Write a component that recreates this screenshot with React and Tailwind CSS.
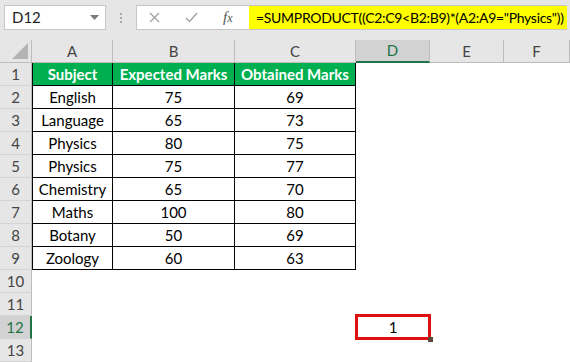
import React from "react";

const cols = [
  { key: "A", w: "w-[81px]" },
  { key: "B", w: "w-[122px]" },
  { key: "C", w: "w-[121px]" },
  { key: "D", w: "w-[74px]" },
  { key: "E", w: "w-[74px]" },
  { key: "F", w: "w-[66px]" },
];

const data = [
  ["Subject", "Expected Marks", "Obtained Marks"],
  ["English", "75", "69"],
  ["Language", "65", "73"],
  ["Physics", "80", "75"],
  ["Physics", "75", "77"],
  ["Chemistry", "65", "70"],
  ["Maths", "100", "80"],
  ["Botany", "50", "69"],
  ["Zoology", "60", "63"],
];

function Cell({ r, c }) {
  const col = cols[c];
  const inTable = r <= 9 && c <= 2;
  let cls = `${col.w} h-full shrink-0 flex items-center justify-center text-[15px] text-black whitespace-nowrap`;
  if (inTable) {
    cls += " border-r border-b border-black";
    if (c === 0) cls += " border-l";
    if (r === 1) cls += " bg-[#00b050] text-white font-bold text-[15.5px]";
  }
  const text = inTable ? data[r - 1][c] : "";
  if (r === 12 && c === 3) {
    return (
      <div className={`${col.w} h-full shrink-0 relative`}>
        <div className="absolute left-[-1px] top-[-2px] w-[76px] h-[26px] border-[3px] border-[#e01010] flex items-center justify-center text-[15px] text-black">
          1
        </div>
        <div className="absolute right-[-3px] bottom-[-3px] w-[5px] h-[5px] bg-[#5a4a3a]" />
      </div>
    );
  }
  return <div className={cls}>{text}</div>;
}

export default function App() {
  const rows = Array.from({ length: 13 }, (_, i) => i + 1);
  return (
    <div
      className="w-[570px] h-[362px] overflow-hidden bg-white"
      style={{ fontFamily: "Lato, 'Open Sans', sans-serif" }}
    >
      {/* Formula bar */}
      <div className="h-[40px] bg-[#e6e6e6] flex items-start pt-[5px] pl-[4px]">
        <div className="w-[102px] h-[25px] bg-white border border-[#c6c6c6] flex items-center justify-between pl-[7px] pr-[6px]">
          <span className="text-[15px] text-[#222]">D12</span>
          <svg width="9" height="6" viewBox="0 0 9 6">
            <path d="M0 0 L9 0 L4.5 5 Z" fill="#7a7a7a" />
          </svg>
        </div>
        <div className="w-[30px] h-[25px] flex flex-col items-center justify-center gap-[2px]">
          <div className="w-[2px] h-[2px] bg-[#a8a8a8]" />
          <div className="w-[2px] h-[2px] bg-[#a8a8a8]" />
          <div className="w-[2px] h-[2px] bg-[#a8a8a8]" />
        </div>
        <div className="w-[113px] h-[25px] bg-white border border-[#c6c6c6] border-r-0 flex items-center">
          <svg className="ml-[12px]" width="11" height="11" viewBox="0 0 11 11">
            <path d="M1 1 L10 10 M10 1 L1 10" stroke="#a3a3a3" strokeWidth="1.4" />
          </svg>
          <svg className="ml-[25px]" width="13" height="11" viewBox="0 0 13 11">
            <path d="M1 6 L4.5 9.5 L12 1" stroke="#a3a3a3" strokeWidth="1.5" fill="none" />
          </svg>
          <span
            className="ml-[25px] text-[15px] italic text-[#555]"
            style={{ fontFamily: "'Liberation Serif', serif" }}
          >
            f<span className="text-[12px]">x</span>
          </span>
        </div>
        <div className="w-[318px] h-[25px] bg-[#ffff00] border-y border-[#c6c6c6] flex items-center pl-[7px] text-[14px] tracking-[-0.3px] text-black whitespace-nowrap">
          =SUMPRODUCT((C2:C9&lt;B2:B9)*(A2:A9="Physics"))
        </div>
      </div>

      {/* Column headers */}
      <div className="h-[23px] flex bg-[#e6e6e6]">
        <div className="w-[32px] h-full shrink-0 border-r border-b border-[#bcbcbc] relative">
          <svg className="absolute right-[3px] bottom-[3px]" width="16" height="16" viewBox="0 0 16 16">
            <path d="M16 0 L16 16 L0 16 Z" fill="#b4b4b4" />
          </svg>
        </div>
        {cols.map((c) => (
          <div
            key={c.key}
            className={`${c.w} h-full shrink-0 flex items-center justify-center text-[15px] border-r ${
              c.key === "D"
                ? "bg-[#d2d2d2] text-[#217346] border-b-2 border-b-[#217346] border-r-[#bcbcbc]"
                : "text-[#444] border-b border-[#bcbcbc]"
            }`}
          >
            {c.key}
          </div>
        ))}
      </div>

      {/* Rows */}
      {rows.map((r) => (
        <div key={r} className="h-[23px] flex">
          <div
            className={`w-[32px] h-full shrink-0 flex items-center justify-center text-[15px] border-b border-[#d4d4d4] ${
              r === 12
                ? "bg-[#d2d2d2] text-[#217346] border-r-2 border-r-[#217346]"
                : "bg-[#e6e6e6] text-[#444] border-r border-r-[#bcbcbc]"
            }`}
          >
            {r}
          </div>
          {cols.map((c, ci) => (
            <Cell key={c.key} r={r} c={ci} />
          ))}
        </div>
      ))}
    </div>
  );
}
